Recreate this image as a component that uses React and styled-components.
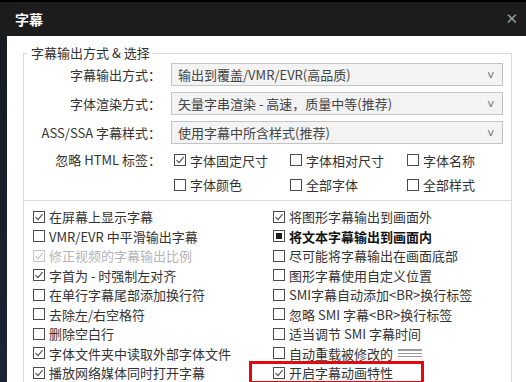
import React from 'react'
import styled, { createGlobalStyle } from 'styled-components'

const GlobalStyle = createGlobalStyle`
html, body {
  margin: 0;
  padding: 0;
  background: #fff;
  overflow: hidden;
}
body {
  font-family: "Noto Sans CJK SC", "Noto Sans", sans-serif;
  font-size: 13px;
  color: #333;
}
`

const Window = styled.div`
width: 526px;
height: 382px;
display: flex;
flex-direction: column;
background: #161a22;
border-top: 2px solid #000;
box-sizing: border-box;
overflow: hidden;
`

const TitleBar = styled.div`
height: 34px;
flex: none;
display: flex;
align-items: center;
justify-content: space-between;
padding: 0 8px 0 15px;
background: #1c1c1c;
color: #fff;
`

const Title = styled.span`
font-size: 14px;
font-weight: 700;
`

const Close = styled.span`
color: #9a9a9a;
font-family: "DejaVu Sans", sans-serif;
font-size: 15px;
`

const Body = styled.div`
flex: 1;
display: flex;
`

const Edge = styled.div`
width: 7px;
flex: none;
background: linear-gradient(#181b22, #1c2336);
`

const Content = styled.div`
flex: 1;
background: #fff;
padding: 9px 14px 0 16px;
display: flex;
flex-direction: column;
`

const Group = styled.fieldset`
margin: 0;
padding: 2px 8px 7px 0;
border: 1px solid #d9d9d9;
min-width: 0;
display: grid;
grid-template-columns: 137px 1fr;
column-gap: 10px;
row-gap: 6px;
align-items: center;
`

const Legend = styled.legend`
margin-left: 3px;
padding: 0 3px 0 4px;
line-height: 16px;
color: #333;
`

const Label = styled.span`
justify-self: end;
color: #333;
white-space: nowrap;
`

const Combo = styled.div`
height: 23px;
box-sizing: border-box;
display: flex;
align-items: center;
justify-content: space-between;
padding: 0 8px 0 6px;
background: #f3f3f3;
border: 1px solid #c4c4c4;
color: #444;
white-space: nowrap;
`

const Arrow = styled.span`
font-family: "DejaVu Sans", sans-serif;
font-size: 11px;
color: #777;
`

const Options = styled.div`
display: grid;
grid-template-columns: 116px 117px 1fr;
padding-left: 3px;
height: 18px;
align-items: center;
`

const List = styled.div`
flex: 1;
border: 1px solid #d9d9d9;
border-top: none;
padding: 6px 0 0 9px;
display: grid;
grid-template-columns: 240px 1fr;
grid-auto-rows: 19.5px;
align-items: center;
`

const Item = styled.label`
position: relative;
display: flex;
align-items: center;
gap: 4px;
height: 100%;
white-space: nowrap;
color: ${p => (p.$disabled ? '#b4b4b4' : p.$bold ? '#111' : '#333')};
font-weight: ${p => (p.$bold ? 700 : 400)};
`

const Box = styled.span`
width: 12px;
height: 12px;
flex: none;
box-sizing: border-box;
border: 1px solid ${p => (p.$disabled ? '#c4c4c4' : '#4a4a4a')};
background: #fff;
display: flex;
align-items: center;
justify-content: center;
`

const Fill = styled.span`
width: 6px;
height: 6px;
background: #1e1e1e;
`

const Smudge = styled.span`
display: inline-block;
width: 24px;
height: 9px;
margin-left: 1px;
background: repeating-linear-gradient(#9a9a9a 0 1.5px, transparent 1.5px 3.5px);
`

const Highlight = styled.span`
position: absolute;
left: -24px;
top: -2px;
width: 175px;
height: 23px;
box-sizing: border-box;
border: 3px solid #e3080e;
pointer-events: none;
`

const Check = ({ state, disabled }) => (
  <Box $disabled={disabled}>
    {state === 'on' && (
      <svg width="10" height="10" viewBox="0 0 10 10">
        <path d="M1.5 5.2 L4 7.7 L8.6 2.2" fill="none" stroke={disabled ? '#c0c0c0' : '#4a4a4a'} strokeWidth="1.1" />
      </svg>
    )}
    {state === 'mixed' && <Fill />}
  </Box>
)

const Option = ({ state, disabled, bold, children, extra }) => (
  <Item $disabled={disabled} $bold={bold}>
    <Check state={state} disabled={disabled} />
    <span>{children}</span>
    {extra}
  </Item>
)

const combos = [
  ['字幕输出方式：', '输出到覆盖/VMR/EVR(高品质)'],
  ['字体渲染方式：', '矢量字串渲染 - 高速，质量中等(推荐)'],
  ['ASS/SSA 字幕样式：', '使用字幕中所含样式(推荐)'],
]

const left = [
  { text: '在屏幕上显示字幕', state: 'on' },
  { text: 'VMR/EVR 中平滑输出字幕' },
  { text: '修正视频的字幕输出比例', state: 'on', disabled: true },
  { text: '字首为 - 时强制左对齐', state: 'on' },
  { text: '在单行字幕尾部添加换行符' },
  { text: '去除左/右空格符' },
  { text: '删除空白行' },
  { text: '字体文件夹中读取外部字体文件', state: 'on' },
  { text: '播放网络媒体同时打开字幕', state: 'on' },
]

const right = [
  { text: '将图形字幕输出到画面外', state: 'on' },
  { text: '将文本字幕输出到画面内', state: 'mixed', bold: true },
  { text: '尽可能将字幕输出在画面底部' },
  { text: '图形字幕使用自定义位置' },
  { text: 'SMI字幕自动添加<BR>换行标签' },
  { text: '忽略 SMI 字幕<BR>换行标签' },
  { text: '适当调节 SMI 字幕时间' },
  { text: '自动重载被修改的', extra: <Smudge /> },
  { text: '开启字幕动画特性', state: 'on', extra: <Highlight /> },
]

const App = () => {
  const rows = left.flatMap((l, i) => [l, right[i]])
  return (
    <>
      <GlobalStyle />
      <Window>
        <TitleBar>
          <Title>字幕</Title>
          <Close>✕</Close>
        </TitleBar>
        <Body>
          <Edge />
          <Content>
            <Group>
              <Legend>字幕输出方式 &amp; 选择</Legend>
              {combos.map(([label, value]) => (
                <React.Fragment key={label}>
                  <Label>{label}</Label>
                  <Combo>
                    <span>{value}</span>
                    <Arrow>v</Arrow>
                  </Combo>
                </React.Fragment>
              ))}
              <Label>忽略 HTML 标签：</Label>
              <Options>
                <Option state="on">字体固定尺寸</Option>
                <Option>字体相对尺寸</Option>
                <Option>字体名称</Option>
              </Options>
              <span />
              <Options>
                <Option>字体颜色</Option>
                <Option>全部字体</Option>
                <Option>全部样式</Option>
              </Options>
            </Group>
            <List>
              {rows.map(r => (
                <Option key={r.text} state={r.state} disabled={r.disabled} bold={r.bold} extra={r.extra}>
                  {r.text}
                </Option>
              ))}
            </List>
          </Content>
        </Body>
      </Window>
    </>
  )
}

export default App
